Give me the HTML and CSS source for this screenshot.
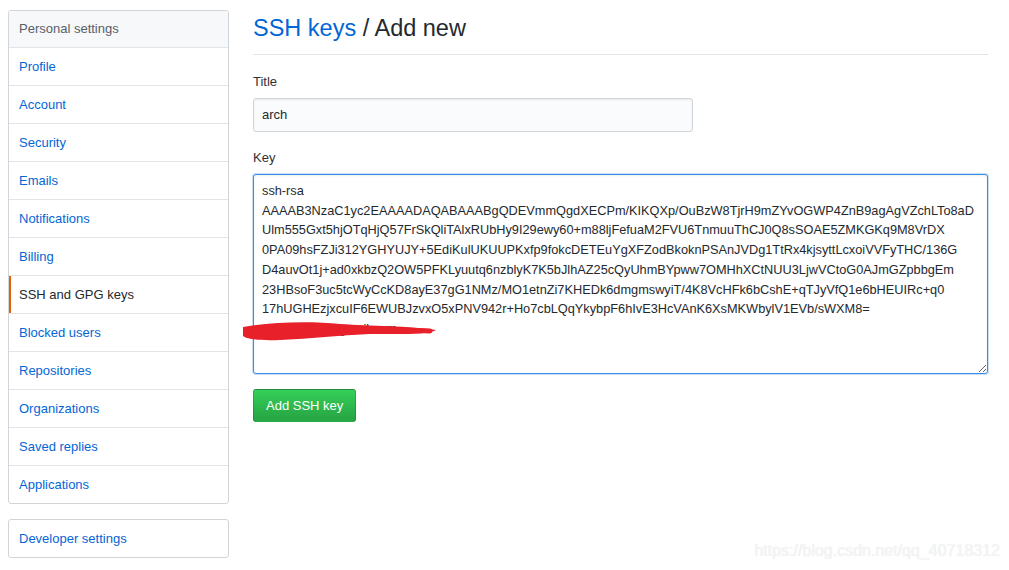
FILE: index.html
```html
<!DOCTYPE html>
<html lang="en">
<head>
<meta charset="utf-8">
<title>SSH keys / Add new</title>
<link rel="stylesheet" href="styles.css">
</head>
<body>
<div class="container">
  <nav class="sidebar">
    <div class="menu">
      <div class="menu-heading">Personal settings</div>
      <a class="menu-item" href="#">Profile</a>
      <a class="menu-item" href="#">Account</a>
      <a class="menu-item" href="#">Security</a>
      <a class="menu-item" href="#">Emails</a>
      <a class="menu-item" href="#">Notifications</a>
      <a class="menu-item" href="#">Billing</a>
      <a class="menu-item selected" href="#">SSH and GPG keys</a>
      <a class="menu-item" href="#">Blocked users</a>
      <a class="menu-item" href="#">Repositories</a>
      <a class="menu-item" href="#">Organizations</a>
      <a class="menu-item" href="#">Saved replies</a>
      <a class="menu-item" href="#">Applications</a>
    </div>
    <div class="menu menu-dev">
      <a class="menu-item" href="#">Developer settings</a>
    </div>
  </nav>
  <main class="main">
    <h2 class="subhead"><a class="subhead-link" href="#">SSH keys</a> / Add new</h2>
    <form class="form">
      <div class="form-group">
        <label class="label" for="title">Title</label>
        <input class="input" id="title" type="text" value="arch">
      </div>
      <div class="form-group">
        <label class="label" for="key">Key</label>
        <textarea class="textarea" id="key" wrap="off">ssh-rsa
AAAAB3NzaC1yc2EAAAADAQABAAABgQDEVmmQgdXECPm/KIKQXp/OuBzW8TjrH9mZYvOGWP4ZnB9agAgVZchLTo8aD
Ulm555Gxt5hjOTqHjQ57FrSkQliTAlxRUbHy9I29ewy60+m88ljFefuaM2FVU6TnmuuThCJ0Q8sSOAE5ZMKGKq9M8VrDX
0PA09hsFZJi312YGHYUJY+5EdiKulUKUUPKxfp9fokcDETEuYgXFZodBkoknPSAnJVDg1TtRx4kjsyttLcxoiVVFyTHC/136G
D4auvOt1j+ad0xkbzQ2OW5PFKLyuutq6nzblyK7K5bJlhAZ25cQyUhmBYpww7OMHhXCtNUU3LjwVCtoG0AJmGZpbbgEm
23HBsoF3uc5tcWyCcKD8ayE37gG1NMz/MO1etnZi7KHEDk6dmgmswyiT/4K8VcHFk6bCshE+qTJyVfQ1e6bHEUIRc+q0
17hUGHEzjxcuIF6EWUBJzvxO5xPNV942r+Ho7cbLQqYkybpF6hIvE3HcVAnK6XsMKWbylV1EVb/sWXM8=
xxxxxxxxxx@gmail.com</textarea>
      </div>
      <button class="btn" type="button">Add SSH key</button>
    </form>
  </main>
</div>
<svg class="scribble" width="200" height="26" viewBox="0 0 200 26" aria-hidden="true">
  <path d="M3,9 C30,4 70,3 100,6 C130,8 170,8 196,12 C188,17 160,16 130,16 C100,17 70,21 40,22 C20,23 6,21 3,18 Z" fill="#e8202a"/>
  <path d="M10,12 C60,10 120,10 190,13" stroke="#e8202a" stroke-width="5" fill="none" stroke-linecap="round"/>
</svg>
<div class="watermark">https://blog.csdn.net/qq_40718312</div>
</body>
</html>
```

FILE: styles.css
```css
* { box-sizing: border-box; }

html, body {
  margin: 0;
  padding: 0;
  background: #fff;
  font-family: "Liberation Sans", Arial, sans-serif;
  color: #24292e;
}

.container {
  display: flex;
  gap: 24px;
  padding: 10px 21px 0 8px;
  width: 1009px;
}

.sidebar {
  width: 221px;
  flex: none;
  display: flex;
  flex-direction: column;
  gap: 15px;
}

.menu {
  display: flex;
  flex-direction: column;
  border: 1px solid #d1d5da;
  border-radius: 3px;
  background: #fff;
  overflow: hidden;
}

.menu-heading {
  background: #f6f8fa;
  color: #586069;
  font-size: 13px;
  line-height: 20px;
  padding: 8px 10px;
}

.menu-item {
  position: relative;
  display: block;
  padding: 8px 10px;
  font-size: 13px;
  line-height: 21px;
  color: #0366d6;
  text-decoration: none;
  border-top: 1px solid #e1e4e8;
}

.menu-dev .menu-item {
  border-top: 0;
  line-height: 20px;
  padding-top: 9px;
}

.menu-item.selected {
  color: #24292e;
}

.menu-item.selected::before {
  content: "";
  position: absolute;
  left: 0;
  top: 0;
  bottom: 0;
  width: 2px;
  background: #e36209;
}

.main {
  flex: 1;
  min-width: 0;
}

.subhead {
  margin: 0 0 16px;
  padding-bottom: 8px;
  border-bottom: 1px solid #e1e4e8;
  font-size: 23.5px;
  line-height: 36px;
  font-weight: 400;
  color: #24292e;
}

.subhead-link {
  color: #0366d6;
  text-decoration: none;
}

.form {
  display: flex;
  flex-direction: column;
  align-items: flex-start;
}

.form-group {
  display: flex;
  flex-direction: column;
  align-items: flex-start;
  width: 100%;
  margin-bottom: 15px;
}

.label {
  font-size: 13px;
  line-height: 20px;
  color: #333;
  margin-top: 1px;
  margin-bottom: 6px;
}

.input {
  width: 440px;
  height: 34px;
  padding: 6px 8px 7px;
  font-family: "Liberation Sans", Arial, sans-serif;
  font-size: 13px;
  line-height: 20px;
  color: #24292e;
  background: #fafbfc;
  border: 1px solid #d1d5da;
  border-radius: 3px;
  box-shadow: inset 0 1px 2px rgba(27, 31, 35, 0.075);
  outline: none;
}

.textarea {
  width: 100%;
  height: 200px;
  padding: 6px 8px;
  font-family: "Liberation Sans", Arial, sans-serif;
  font-size: 12.75px;
  line-height: 19.7px;
  color: #24292e;
  background: #fff;
  border: 1px solid #3a8ee6;
  border-radius: 3px;
  box-shadow: inset 0 1px 2px rgba(27, 31, 35, 0.075), 0 0 0 1px rgba(3, 102, 214, 0.22);
  white-space: pre;
  overflow: hidden;
  resize: both;
  outline: none;
}

.btn {
  height: 33px;
  padding: 6px 12px;
  font-family: "Liberation Sans", Arial, sans-serif;
  font-size: 13px;
  line-height: 19px;
  color: #fff;
  background: linear-gradient(-180deg, #34d058 0%, #28a745 90%);
  border: 1px solid rgba(27, 31, 35, 0.2);
  border-radius: 3px;
  cursor: pointer;
}

.scribble {
  position: absolute;
  left: 240px;
  top: 318px;
}

.watermark {
  position: absolute;
  right: 9px;
  top: 541px;
  font-family: "Liberation Sans", Arial, sans-serif;
  font-size: 16px;
  line-height: 20px;
  color: #f6f6f6;
  text-shadow: 0 0 1px #e0e0e0;
}
```
